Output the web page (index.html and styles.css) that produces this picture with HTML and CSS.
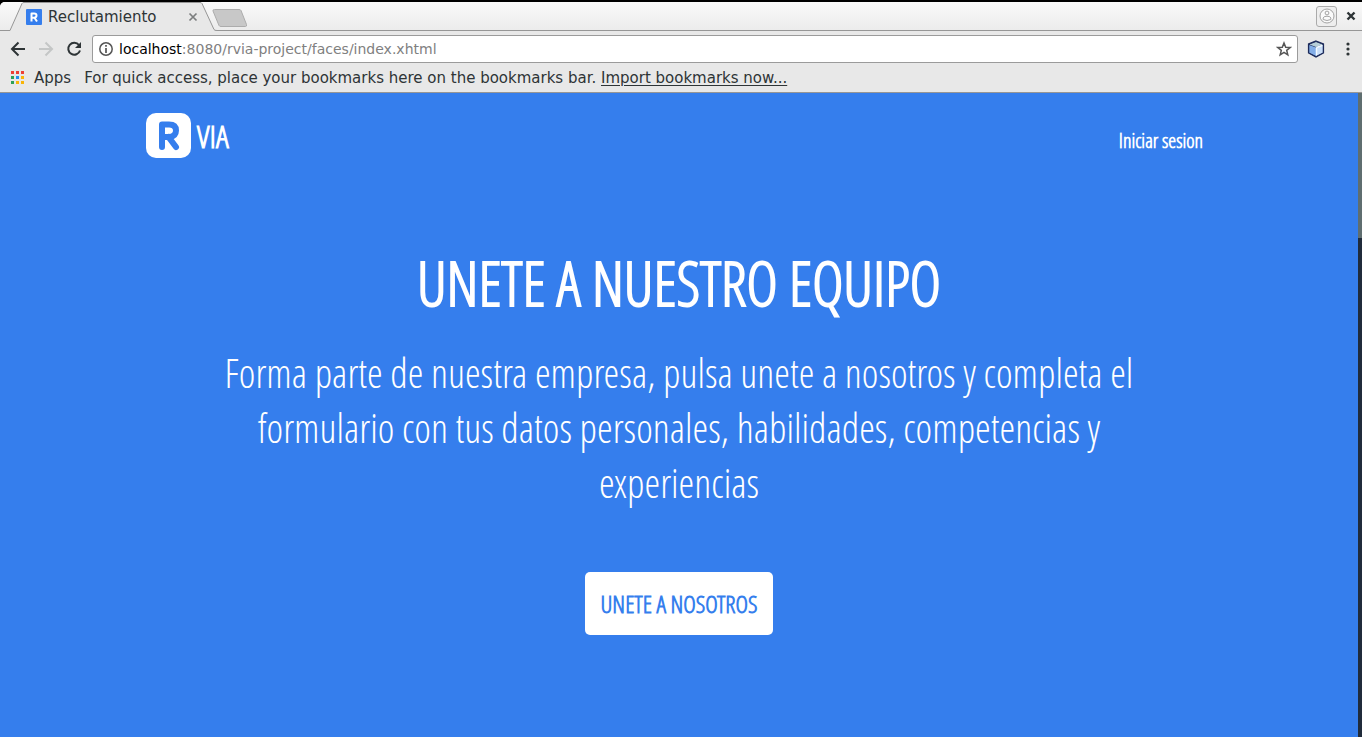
FILE: index.html
```html
<!DOCTYPE html>
<html lang="es">
<head>
<meta charset="utf-8">
<meta name="viewport" content="width=device-width, initial-scale=1">
<title>Reclutamiento</title>
<link rel="stylesheet" href="styles.css">
</head>
<body>
<div class="window">
  <header class="browser">
    <div class="tabstrip">
      <div class="tab">
        <svg class="tab-shape" width="208" height="29" viewBox="0 0 208 29" aria-hidden="true"><path d="M0 29 L1 28.500 L13 1.500 Q13.500 .5 15 .5 H191 Q192.500 .5 193 1.500 L205 27.500 Q205.500 28.500 208 28.500 V29Z" fill="#e8e8e8"/><path d="M0 28.500 H1 L13 1.500 Q13.500 .5 15 .5 H191 Q192.500 .5 193 1.500 L205 27.500 Q205.500 28.500 208 28.500" fill="none" stroke="#969696"/></svg>
        <svg class="favicon" width="16" height="16" viewBox="0 0 16 16" aria-hidden="true"><rect width="16" height="16" rx="1" fill="#357eed"/><path d="M5.500 12.500V4.500H8.200Q10.500 4.500 10.500 6.500T8.200 8.700H6M8.500 8.700L11 12.500" fill="none" stroke="#fff" stroke-width="2" stroke-linejoin="round"/></svg>
        <span class="tab-title">Reclutamiento</span>
        <button class="icon-button tab-close" aria-label="Cerrar"><svg width="10" height="10" viewBox="0 0 10 10"><path d="M1.500 1.500L8.500 8.500M8.500 1.500L1.500 8.500" stroke="#7b7d7e" stroke-width="1.700"/></svg></button>
      </div>
      <button class="icon-button new-tab" aria-label="Nueva"><svg width="36" height="18" viewBox="0 0 36 18"><path d="M2.500 .5H27Q28.500 .5 29 1.500L34.500 15.500Q35 17.500 33.500 17.500H9Q7.500 17.500 7 16.500L1 2Q.5 .5 2.500 .5Z" fill="#c8c8c8" stroke="#acacac"/></svg></button>
      <div class="window-controls">
        <button class="icon-button profile" aria-label="Perfil"><svg width="16" height="16" viewBox="0 0 16 16" fill="none" stroke="#a3a3a3"><circle cx="8" cy="8" r="7" fill="#fafafa"/><circle cx="8" cy="5" r="1.900"/><path d="M4.200 11.500V10Q4.500 8.200 8 8.200T11.800 10V11.500Q8 13.500 4.200 11.500Z"/></svg></button>
        <button class="icon-button" aria-label="Salir"><svg width="10" height="10" viewBox="0 0 10 10"><path d="M1.500 1.500L8.500 8.500M8.500 1.500L1.500 8.500" stroke="#2e3436" stroke-width="2.400"/></svg></button>
      </div>
    </div>
    <div class="toolbar">
      <button class="icon-button" aria-label="Atrás"><svg width="16" height="16" viewBox="0 0 16 16" fill="none" stroke="#2e3436" stroke-width="2"><path d="M15 8H2.500M8.500 1.500L2 8L8.500 14.500"/></svg></button>
      <button class="icon-button" aria-label="Adelante"><svg width="16" height="16" viewBox="0 0 16 16" fill="none" stroke="#c4c6c6" stroke-width="2"><path d="M1 8H13.500M7.500 1.500L14 8L7.500 14.500"/></svg></button>
      <button class="icon-button" aria-label="Recargar"><svg width="16" height="16" viewBox="0 0 16 16"><path d="M13 4A6 6 0 1 0 14 9.500" fill="none" stroke="#2e3436" stroke-width="2"/><path d="M15 1V7H9Z" fill="#2e3436"/></svg></button>
      <div class="address">
        <svg width="14" height="14" viewBox="0 0 14 14" aria-hidden="true"><circle cx="7" cy="7" r="6.200" fill="none" stroke="#555" stroke-width="1.500"/><path d="M7 3V4.800M7 6V11" stroke="#555" stroke-width="1.700"/></svg>
        <div class="url" role="textbox" aria-label="Dirección" contenteditable="true" spellcheck="false"><span class="host">localhost</span>:8080/rvia-project/faces/index.xhtml</div>
        <button class="icon-button" aria-label="Favorito"><svg width="16" height="16" viewBox="0 0 16 16"><path d="M8 2L9.700 6.200L14.200 6.500L10.700 9.400L11.800 13.800L8 11.400L4.200 13.800L5.300 9.400L1.800 6.500L6.300 6.200Z" fill="none" stroke="#555" stroke-width="1.500"/></svg></button>
      </div>
      <button class="icon-button extension" aria-label="Extensión"><svg width="18" height="18" viewBox="0 0 18 18"><path d="M9 1L16.500 4V13L9 17L1.500 13V4Z" fill="#1c2a5a"/><path d="M9 2L15.500 4.500L9 7L2.500 4.500Z" fill="#b7cfd8"/><path d="M2.200 5L9 7.500V16L2.200 12.700Z" fill="#83aee8"/><path d="M9 7.500L15.800 5V12.700L9 16Z" fill="#c9def8"/><path d="M9.500 7.500V15.500M9.500 7.500L15.500 5.200" stroke="#f2f9ff" stroke-width="1.500"/><path d="M9 1L16.500 4V13L9 17L1.500 13V4Z" fill="none" stroke="#1c2a5a" stroke-width="1.200"/></svg></button>
      <button class="icon-button menu" aria-label="Menú"><svg width="4" height="14" viewBox="0 0 4 14" fill="#2e3436"><circle cx="2" cy="2" r="1.600"/><circle cx="2" cy="7" r="1.600"/><circle cx="2" cy="12" r="1.600"/></svg></button>
    </div>
    <nav class="bookmarks" aria-label="Marcadores">
      <a class="apps" href="#apps"><svg width="13" height="13" viewBox="0 0 13 13" aria-hidden="true"><path d="M0 0h3v3H0zM5 0h3v3H5zM10 0h3v3h-3z" fill="#ee4035"/><path d="M0 5h3v3H0z" fill="#2ca057"/><path d="M5 5h3v3H5z" fill="#2590ee"/><path d="M10 5h3v3h-3z" fill="#f9b508"/><path d="M0 10h3v3H0z" fill="#2ca057"/><path d="M5 10h3v3H5zM10 10h3v3h-3z" fill="#f9b508"/></svg>Apps</a>
      <span>For quick access, place your bookmarks here on the bookmarks bar. <a class="import" href="#import">Import bookmarks now...</a></span>
    </nav>
  </header>
  <div class="viewport">
    <div class="page">
      <header class="site-header">
        <a class="brand" href="#inicio"><svg width="45" height="45" viewBox="0 0 45 45" aria-hidden="true"><rect width="45" height="45" rx="10" fill="#fff"/><path d="M16 34V11.500H23Q30 11.500 30 17.500T23 24H16M22.500 24L30 34" fill="none" stroke="#357eed" stroke-width="6" stroke-linecap="round" stroke-linejoin="round"/></svg><span>VIA</span></a>
        <a class="login" href="#login">Iniciar sesion</a>
      </header>
      <main class="hero">
        <h1>UNETE A NUESTRO EQUIPO</h1>
        <p>Forma parte de nuestra empresa, pulsa unete a nosotros y completa el formulario con tus datos personales, habilidades, competencias y experiencias</p>
        <button class="join">UNETE A NOSOTROS</button>
      </main>
    </div>
    <div class="scrollbar" aria-hidden="true"><div class="thumb"></div></div>
  </div>
</div>
</body>
</html>
```
FILE: styles.css
```css
* { box-sizing: border-box; }
body { margin: 0; background: #000; font-family: "DejaVu Sans", sans-serif; }
svg { display: block; flex: none; }
a { color: inherit; text-decoration: none; }
.window { display: flex; flex-direction: column; min-height: 100vh; padding-top: 2px; }
.icon-button { display: flex; align-items: center; justify-content: center; padding: 0; border: 0; background: none; }
.browser { background: #e8e8e8; color: #2e3436; border-bottom: 1px solid #969696; border-radius: 5px 0 0 0; font-size: 15px; }
.tabstrip { display: flex; height: 29px; padding-left: 9px; border-bottom: 1px solid #969696; background: linear-gradient(#fafafa, #ececec); border-radius: 5px 0 0 0; }
.tab { position: relative; display: flex; align-items: center; width: 203px; height: 29px; padding: 0 14px 0 17px; }
.tab-shape { position: absolute; left: 0; top: 0; }
.favicon, .tab-title, .tab-close { position: relative; }
.tab-title { margin-left: 6px; }
.tab-close { margin-left: auto; }
.new-tab { height: 18px; margin-top: 7px; }
.window-controls { display: flex; align-items: center; gap: 9px; margin-left: auto; padding-right: 6px; }
.profile { width: 21px; height: 21px; border: 1px solid #aaa; border-radius: 3px; background: #eee; }
.toolbar { display: flex; align-items: center; gap: 12px; height: 36px; padding: 0 12px 0 10px; }
.address { display: flex; align-items: center; flex: 1; gap: 6px; height: 28px; margin-left: -2px; padding: 0 5px 0 6px; border: 1px solid #9b9b9b; border-radius: 3px; background: #fff; }
.url { flex: 1; color: #808080; font-size: 14px; white-space: nowrap; outline: none; }
.host { color: #000; }
.extension { margin-left: -3px; }
.menu { margin: 0 0 0 9px; }
.bookmarks { display: flex; align-items: center; gap: 13px; height: 25px; padding: 0 11px 4px; white-space: nowrap; }
.apps { display: flex; align-items: center; gap: 10px; }
.import { text-decoration: underline; text-underline-offset: 2px; }
.viewport { display: flex; flex: 1; background: #357eed; }
.page { flex: 1; color: #fff; font-family: "Open Sans Condensed Light", "OpenSans-CondensedLight", "Open Sans Condensed", "Roboto Condensed", sans-serif; font-weight: 300; }
.site-header { display: flex; align-items: center; justify-content: space-between; max-width: 1068px; margin: 0 auto; padding: 20px 10px 0 1px; }
.brand { display: flex; align-items: center; gap: 6px; font-size: 32px; line-height: 45px; font-weight: 700; }
.login { padding-top: 10px; font-size: 20px; font-weight: 700; }
.hero { display: flex; flex-direction: column; align-items: center; max-width: 940px; margin: 0 auto; padding-top: 81px; text-align: center; }
.hero h1 { margin: 0; font-size: 60px; line-height: 88px; font-weight: 700; white-space: nowrap; }
.hero p { margin: 18px 0 0; font-size: 40px; line-height: 55px; }
.join { margin-top: 62px; padding: 15px 16px; border: 0; border-radius: 5px; background: #fff; color: #357eed; font: inherit; font-size: 24px; line-height: 33px; font-weight: 700; }
.scrollbar { width: 4px; background: #202b3b; }
.thumb { height: 145px; background: #5f6e70; }
```
